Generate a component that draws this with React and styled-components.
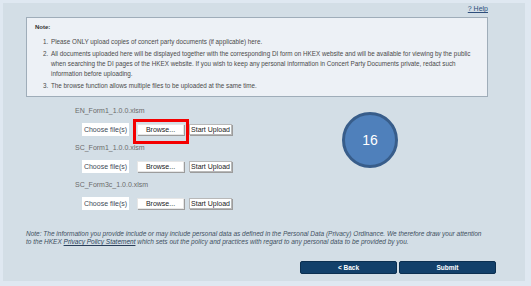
import React from 'react';
import styled, { createGlobalStyle } from 'styled-components';

const GlobalStyle = createGlobalStyle`
  html, body {
    margin: 0;
    padding: 0;
    background: #dfe8f1;
    font-family: "Liberation Sans", Arial, sans-serif;
  }
`;

const Page = styled.div`
  width: 531px;
  height: 286px;
  padding: 3px 6px 5px 3px;
  box-sizing: border-box;
`;

const Panel = styled.div`
  position: relative;
  height: 278px;
  background: #d3dee6;
  padding: 0 37px 0 23px;
  box-sizing: border-box;
`;

const HelpRow = styled.div`
  height: 11px;
  display: flex;
  justify-content: flex-end;
  align-items: center;
  margin-bottom: 3px;
`;

const HelpLink = styled.a`
  font-size: 7px;
  color: #2d4e7c;
  text-decoration: underline;
`;

const NoteBox = styled.div`
  height: 80px;
  box-sizing: border-box;
  border: 1px solid #9fadb9;
  background: #edf1f6;
  padding: 4px 6px 0 8px;
  color: #4a4a4a;
  font-size: 6.3px;
`;

const NoteTitle = styled.div`
  font-weight: bold;
  font-size: 6px;
  line-height: 10px;
  color: #333;
`;

const NoteList = styled.ol`
  margin: 5px 0 0;
  padding: 0 0 0 15px;

  li {
    line-height: 10px;
    margin-bottom: 2px;
    padding-left: 1px;
  }
`;

const Files = styled.div`
  padding: 9px 0 0 49px;
`;

const FileLabel = styled.div`
  font-size: 7px;
  line-height: 10px;
  color: #6b6b6b;
  margin-bottom: 7px;
`;

const FileRow = styled.div`
  display: flex;
  align-items: center;
  height: 13px;
  margin-bottom: 7px;
  padding-left: 7px;
`;

const ChooseBox = styled.div`
  width: 47px;
  height: 13px;
  background: #fff;
  font-size: 7px;
  color: #3d4a57;
  display: flex;
  align-items: center;
  justify-content: center;
  margin-right: 8px;
`;

const BrowseWrap = styled.div`
  position: relative;
  margin-right: 5px;
`;

const Btn = styled.div`
  width: ${p => p.$w}px;
  height: 11px;
  box-sizing: border-box;
  background: #fff;
  border: 1px solid ${p => (p.$framed ? '#b8b8b8' : '#e6e6e6')};
  box-shadow: 1px 1px 0 #9c9c9c;
  font-size: 7px;
  color: #222;
  white-space: nowrap;
  display: flex;
  align-items: center;
  justify-content: center;
`;

const Highlight = styled.div`
  position: absolute;
  left: -4px;
  right: -5px;
  top: -5px;
  bottom: -9px;
  border: 3px solid #f40000;
`;

const StepBadge = styled.div`
  position: absolute;
  left: 339px;
  top: 109px;
  width: 56px;
  height: 56px;
  box-sizing: border-box;
  border-radius: 50%;
  background: #4f80bb;
  border: 3px solid #385d8a;
  color: #fff;
  font-size: 14px;
  display: flex;
  align-items: center;
  justify-content: center;
`;

const Disclaimer = styled.p`
  margin: 20px 0 0;
  font-size: 6.5px;
  line-height: 8px;
  font-style: italic;
  color: #3f5062;

  a {
    color: #2a3f5a;
    text-decoration: underline;
  }
`;

const Actions = styled.div`
  display: flex;
  justify-content: flex-end;
  gap: 2px;
  margin: 15px -8px 0 0;
`;

const NavButton = styled.button`
  width: 97px;
  height: 13px;
  padding: 0;
  border: 1px solid #0b2f50;
  border-radius: 2px;
  background: #12406a;
  color: #fff;
  font-family: "Liberation Sans", Arial, sans-serif;
  font-size: 6.5px;
  font-weight: bold;
`;

const files = ['EN_Form1_1.0.0.xlsm', 'SC_Form1_1.0.0.xlsm', 'SC_Form3c_1.0.0.xlsm'];

export default function App() {
  return (
    <Page>
      <GlobalStyle />
      <Panel>
        <HelpRow>
          <HelpLink>? Help</HelpLink>
        </HelpRow>
        <NoteBox>
          <NoteTitle>Note:</NoteTitle>
          <NoteList>
            <li>Please ONLY upload copies of concert party documents (if applicable) here.</li>
            <li>
              All documents uploaded here will be displayed together with the corresponding DI form on HKEX website and will be available for viewing by the public when searching the DI pages of the HKEX website. If you wish to keep any personal information in Concert Party Documents private, redact such information before uploading.
            </li>
            <li>The browse function allows multiple files to be uploaded at the same time.</li>
          </NoteList>
        </NoteBox>
        <Files>
          {files.map((f, i) => (
            <React.Fragment key={f}>
              <FileLabel>{f}</FileLabel>
              <FileRow>
                <ChooseBox>Choose file(s)</ChooseBox>
                <BrowseWrap>
                  <Btn $w={47}>Browse...</Btn>
                  {i === 0 && <Highlight />}
                </BrowseWrap>
                <Btn $w={43} $framed>Start Upload</Btn>
              </FileRow>
            </React.Fragment>
          ))}
        </Files>
        <StepBadge>16</StepBadge>
        <Disclaimer>
          Note: The information you provide include or may include personal data as defined in the Personal Data (Privacy) Ordinance. We therefore draw your attention to the HKEX <a>Privacy Policy Statement</a> which sets out the policy and practices with regard to any personal data to be provided by you.
        </Disclaimer>
        <Actions>
          <NavButton>&lt; Back</NavButton>
          <NavButton>Submit</NavButton>
        </Actions>
      </Panel>
    </Page>
  );
}
